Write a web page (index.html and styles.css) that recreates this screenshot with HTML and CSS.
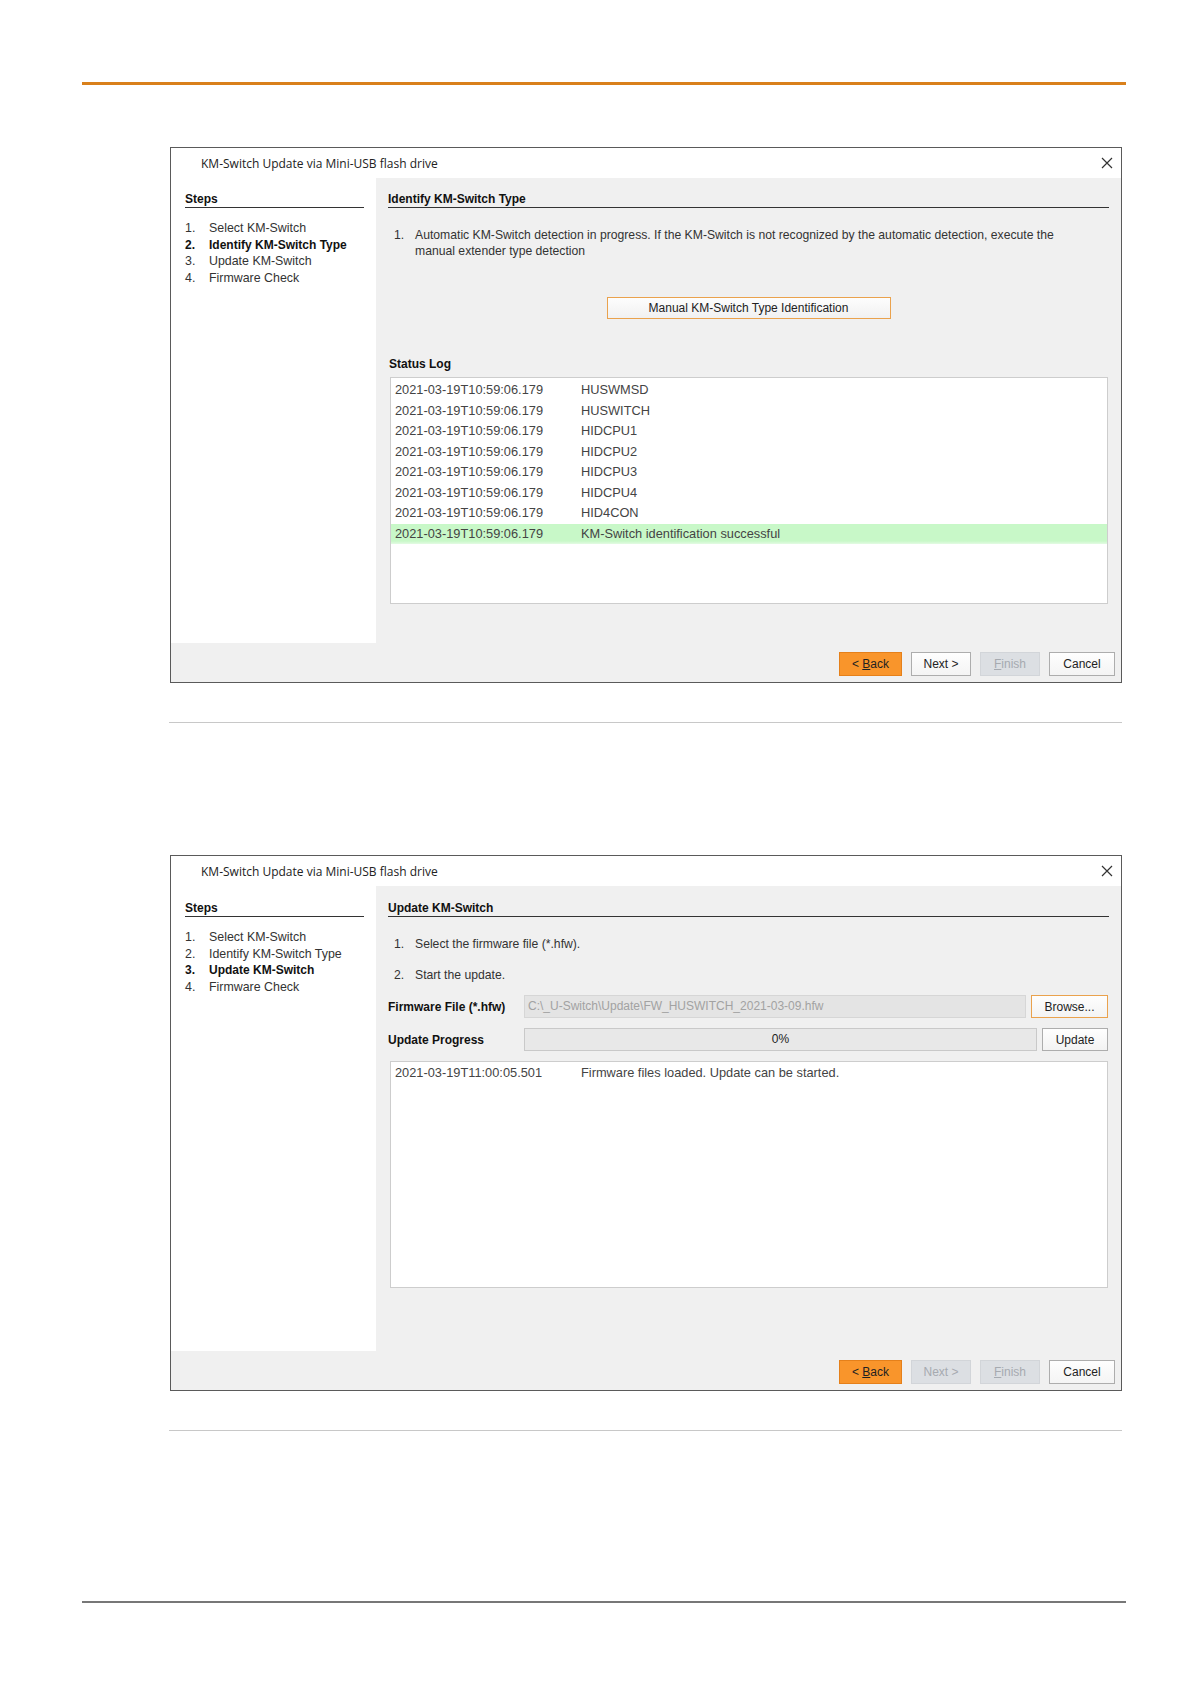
FILE: index.html
```html
<!DOCTYPE html>
<html lang="en">
<head>
    <meta charset="UTF-8">
    <title>KM-Switch Update via Mini-USB flash drive</title>
    <link rel="stylesheet" href="styles.css">
</head>
<body>
    <div class="page">
        <div class="rule-top"></div>

        <!-- Step 2: identify type -->
        <div class="dialog first">
            <div class="titlebar">
                <span class="title">KM-Switch Update via Mini-USB flash drive</span>
                <svg class="close" width="12" height="12" viewBox="0 0 12 12">
                    <path d="M1 1 L11 11 M11 1 L1 11" stroke="#333" stroke-width="1.2" fill="none"/>
                </svg>
            </div>
            <div class="body">
                <div class="steps">
                    <div class="head">Steps</div>
                    <ol class="step-list">
                        <li><span class="num">1.</span>Select KM-Switch</li>
                        <li class="current"><span class="num">2.</span>Identify KM-Switch Type</li>
                        <li><span class="num">3.</span>Update KM-Switch</li>
                        <li><span class="num">4.</span>Firmware Check</li>
                    </ol>
                </div>
                <div class="content">
                    <div class="head">Identify KM-Switch Type</div>
                    <div class="instr first-instr">
                        <span class="num">1.</span>
                        <span>Automatic KM-Switch detection in progress. If the KM-Switch is not recognized by the automatic detection, execute the manual extender type detection</span>
                    </div>
                    <button class="manual-btn">Manual KM-Switch Type Identification</button>
                    <div class="label status-label">Status Log</div>
                    <div class="log">
                        <div class="row"><span class="ts">2021-03-19T10:59:06.179</span><span>HUSWMSD</span></div>
                        <div class="row"><span class="ts">2021-03-19T10:59:06.179</span><span>HUSWITCH</span></div>
                        <div class="row"><span class="ts">2021-03-19T10:59:06.179</span><span>HIDCPU1</span></div>
                        <div class="row"><span class="ts">2021-03-19T10:59:06.179</span><span>HIDCPU2</span></div>
                        <div class="row"><span class="ts">2021-03-19T10:59:06.179</span><span>HIDCPU3</span></div>
                        <div class="row"><span class="ts">2021-03-19T10:59:06.179</span><span>HIDCPU4</span></div>
                        <div class="row"><span class="ts">2021-03-19T10:59:06.179</span><span>HID4CON</span></div>
                        <div class="row ok"><span class="ts">2021-03-19T10:59:06.179</span><span>KM-Switch identification successful</span></div>
                    </div>
                </div>
            </div>
            <div class="footer">
                <button class="btn back">&lt; <u>B</u>ack</button>
                <button class="btn">Next &gt;</button>
                <button class="btn disabled"><u>F</u>inish</button>
                <button class="btn cancel">Cancel</button>
            </div>
        </div>
        <div class="sep"></div>

        <!-- Step 3: update -->
        <div class="dialog second">
            <div class="titlebar">
                <span class="title">KM-Switch Update via Mini-USB flash drive</span>
                <svg class="close" width="12" height="12" viewBox="0 0 12 12">
                    <path d="M1 1 L11 11 M11 1 L1 11" stroke="#333" stroke-width="1.2" fill="none"/>
                </svg>
            </div>
            <div class="body">
                <div class="steps">
                    <div class="head">Steps</div>
                    <ol class="step-list">
                        <li><span class="num">1.</span>Select KM-Switch</li>
                        <li><span class="num">2.</span>Identify KM-Switch Type</li>
                        <li class="current"><span class="num">3.</span>Update KM-Switch</li>
                        <li><span class="num">4.</span>Firmware Check</li>
                    </ol>
                </div>
                <div class="content">
                    <div class="head">Update KM-Switch</div>
                    <div class="instr step-a"><span class="num">1.</span><span>Select the firmware file (*.hfw).</span></div>
                    <div class="instr step-b"><span class="num">2.</span><span>Start the update.</span></div>
                    <div class="field-row file-row">
                        <span class="label">Firmware File (*.hfw)</span>
                        <div class="path">C:\_U-Switch\Update\FW_HUSWITCH_2021-03-09.hfw</div>
                        <button class="side-btn browse">Browse...</button>
                    </div>
                    <div class="field-row progress-row">
                        <span class="label">Update Progress</span>
                        <div class="progress">0%</div>
                        <button class="side-btn update">Update</button>
                    </div>
                    <div class="log second-log">
                        <div class="row"><span class="ts">2021-03-19T11:00:05.501</span><span>Firmware files loaded. Update can be started.</span></div>
                    </div>
                </div>
            </div>
            <div class="footer">
                <button class="btn back">&lt; <u>B</u>ack</button>
                <button class="btn disabled">Next &gt;</button>
                <button class="btn disabled"><u>F</u>inish</button>
                <button class="btn cancel">Cancel</button>
            </div>
        </div>
        <div class="sep"></div>

        <div class="rule-bottom"></div>
    </div>
</body>
</html>
```

FILE: styles.css
```css
body {
    margin: 0;
    background: white;
    font-family: "Liberation Sans", Arial, sans-serif;
    font-size: 12px;
    color: #333;
}
.page {
    padding: 82px 0 0 82px;
    width: 1044px;
}
.rule-top {
    height: 3px;
    background: #d9801b;
}
.rule-bottom {
    height: 2px;
    background: #777;
    margin-top: 170px;
}
.sep {
    margin: 39px 0 0 87px;
    width: 953px;
    height: 1px;
    background: #c8c8c8;
}
.dialog {
    margin-left: 88px;
    width: 952px;
    height: 536px;
    box-sizing: border-box;
    border: 1px solid #5a5a5a;
    background: #f0f0f0;
    display: flex;
    flex-direction: column;
}
.dialog.first {
    margin-top: 62px;
}
.dialog.second {
    margin-top: 132px;
}
.titlebar {
    height: 30px;
    background: white;
    display: flex;
    align-items: center;
    justify-content: space-between;
    padding: 0 8px 0 30px;
}
.title {
    font-family: "Open Sans", "Noto Sans", sans-serif;
    font-size: 12px;
    color: #222;
}
.body {
    height: 465px;
    display: flex;
}
.steps {
    width: 205px;
    box-sizing: border-box;
    background: white;
    padding: 13px 12px 0 14px;
}
.head {
    font-weight: bold;
    line-height: 16px;
    color: #111;
    border-bottom: 1px solid #333;
}
.second .head {
    padding-top: 1px;
}
.step-list {
    list-style: none;
    margin: 12px 0 0;
    padding: 0;
    line-height: 16.5px;
    font-size: 12.4px;
}
.step-list .num {
    display: inline-block;
    width: 24px;
}
.step-list .current {
    font-weight: bold;
    color: #111;
    font-size: 12px;
}
.content {
    flex: 1;
    padding: 13px 12px 0 12px;
}
.instr {
    display: flex;
    line-height: 16px;
    padding-left: 6px;
    font-size: 12.2px;
}
.instr .num {
    flex: none;
    width: 21px;
}
.first-instr {
    margin-top: 19px;
    padding-right: 20px;
}
.step-a {
    margin-top: 19px;
}
.step-b {
    margin-top: 15px;
}
.manual-btn {
    display: block;
    margin: 38px auto 0;
    width: 284px;
    height: 22px;
    font-family: inherit;
    font-size: 12px;
    color: #222;
    background: linear-gradient(#fdfdfd, #f1f1f1);
    border: 1px solid #eaa24d;
    padding: 0;
}
.label {
    font-weight: bold;
    color: #111;
    line-height: 16px;
}
.status-label {
    display: block;
    margin-top: 37px;
    padding-left: 1px;
}
.log {
    margin: 5px 1px 0 2px;
    height: 227px;
    box-sizing: border-box;
    background: white;
    border: 1px solid #cdcdcd;
    padding-top: 2px;
    color: #444;
    font-size: 12.8px;
}
.log .row {
    height: 20.5px;
    line-height: 20.5px;
    padding-left: 4px;
    display: flex;
}
.log .ts {
    width: 186px;
    flex: none;
}
.log .ok {
    background: linear-gradient(#c8f8c8 85%, #e4fbe4);
}
.second-log {
    margin-top: 10px;
    padding-top: 1px;
}
.field-row {
    display: flex;
    align-items: center;
    height: 23px;
}
.file-row {
    margin-top: 12px;
}
.progress-row {
    margin-top: 10px;
}
.field-row .label {
    width: 136px;
    flex: none;
}
.path {
    width: 502px;
    height: 23px;
    box-sizing: border-box;
    background: #e4e4e4;
    border: 1px solid #d6d6d6;
    color: #a2a2a2;
    line-height: 21px;
    padding-left: 3px;
}
.progress {
    width: 513px;
    height: 23px;
    box-sizing: border-box;
    background: #e8e8e8;
    border: 1px solid #c9c9c9;
    line-height: 21px;
    text-align: center;
    color: #222;
}
.side-btn {
    margin-left: 5px;
    height: 23px;
    font-family: inherit;
    font-size: 12px;
    color: #222;
    background: linear-gradient(#fefefe, #f3f3f3);
    border: 1px solid #adadad;
    padding: 0;
}
.browse {
    width: 77px;
    border-color: #eaa24d;
}
.update {
    width: 66px;
}
.footer {
    flex: 1;
    display: flex;
    justify-content: flex-end;
    align-items: flex-start;
    gap: 9px;
    padding: 9px 6px 0 0;
}
.btn {
    height: 24px;
    width: 60px;
    font-family: inherit;
    font-size: 12px;
    color: #222;
    background: linear-gradient(#fefefe, #f4f4f4);
    border: 1px solid #adadad;
    padding: 0;
}
.btn.back {
    width: 63px;
    background: #f9952b;
    border-color: #e5801a;
    color: #222;
}
.btn.disabled {
    background: #dcdfe3;
    border-color: #d2d5d9;
    color: #a6aab0;
}
.btn.cancel {
    width: 66px;
}
```
